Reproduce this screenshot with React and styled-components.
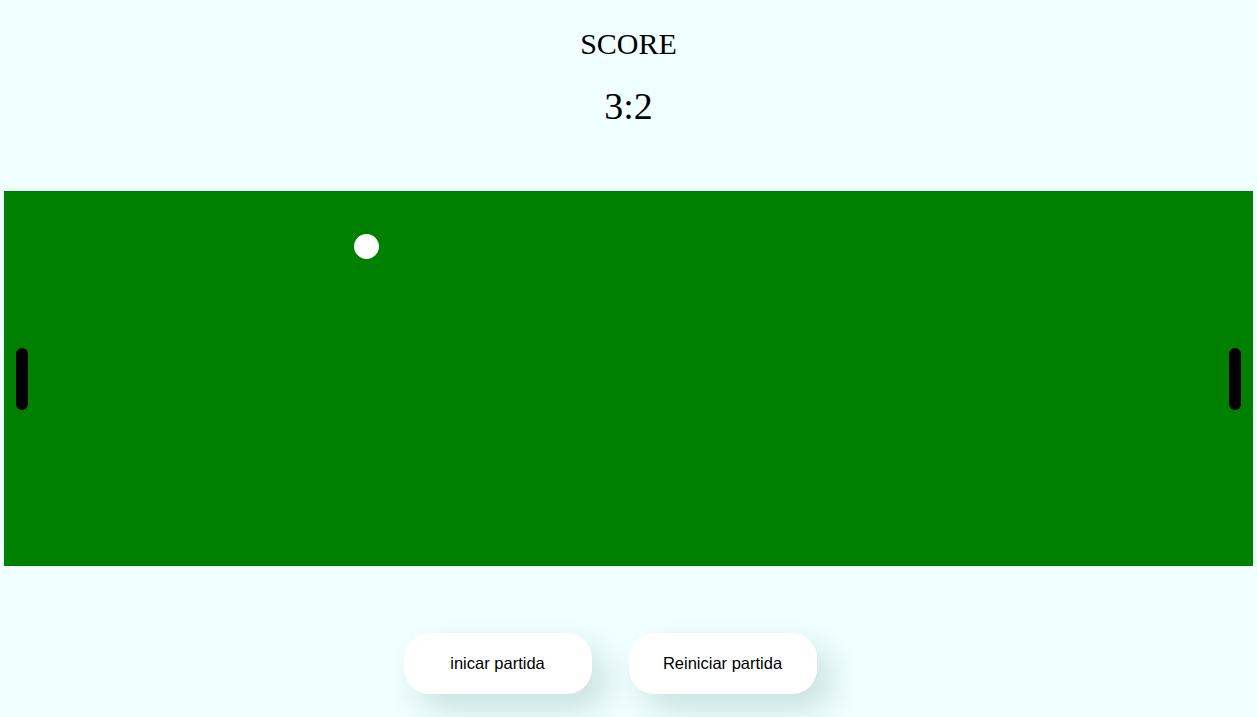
import styled, { createGlobalStyle } from 'styled-components';

const GlobalStyle = createGlobalStyle`
  html, body {
    margin: 0;
    padding: 0;
    background-color: #F0FFFF;
  }
  body {
    font-family: "Liberation Sans", Arial, sans-serif;
  }
`;

const Page = styled.div`
  display: flex;
  flex-direction: column;
  align-items: center;
  min-height: 717px;
`;

const ScoreBox = styled.header`
  display: flex;
  flex-direction: column;
  align-items: center;
  gap: 22px;
  padding-top: 26px;
  margin-bottom: 63px;
  font-family: "Liberation Serif", "DejaVu Serif", serif;
  color: #000;
`;

const ScoreTitle = styled.h2`
  margin: 0;
  font-size: 30px;
  line-height: 36px;
  font-weight: 400;
`;

const ScoreValue = styled.h1`
  margin: 0;
  font-size: 38px;
  line-height: 44px;
  font-weight: 400;
`;

const Field = styled.div`
  position: relative;
  width: 1249px;
  height: 375px;
  background-color: #008000;
  display: flex;
  justify-content: space-between;
  align-items: center;
  padding: 0 12px;
  box-sizing: border-box;
`;

const Paddle = styled.div`
  width: 12px;
  height: 62px;
  border-radius: 6px;
  background-color: #000;
`;

const Ball = styled.div`
  position: absolute;
  width: 25px;
  height: 25px;
  border-radius: 50%;
  background-color: #fff;
`;

const Controls = styled.div`
  display: flex;
  margin-top: 67px;
`;

const Btn = styled.button`
  width: 188px;
  height: 61px;
  margin-right: 37px;
  border: none;
  border-radius: 25px;
  background-color: #fff;
  font-family: "Liberation Sans", Arial, sans-serif;
  font-size: 16.5px;
  color: #000;
  cursor: pointer;
  box-shadow: 14px 16px 32px rgba(0, 70, 70, 0.16);
`;

const App = () => {
  const ball = { x: 350, y: 43 };

  return (
    <Page>
      <GlobalStyle />
      <ScoreBox>
        <ScoreTitle>SCORE</ScoreTitle>
        <ScoreValue>3:2</ScoreValue>
      </ScoreBox>
      <Field>
        <Paddle />
        <Ball style={{ left: ball.x, top: ball.y }} />
        <Paddle />
      </Field>
      <Controls>
        <Btn type="button">inicar partida</Btn>
        <Btn type="button">Reiniciar partida</Btn>
      </Controls>
    </Page>
  );
};

export default App;
